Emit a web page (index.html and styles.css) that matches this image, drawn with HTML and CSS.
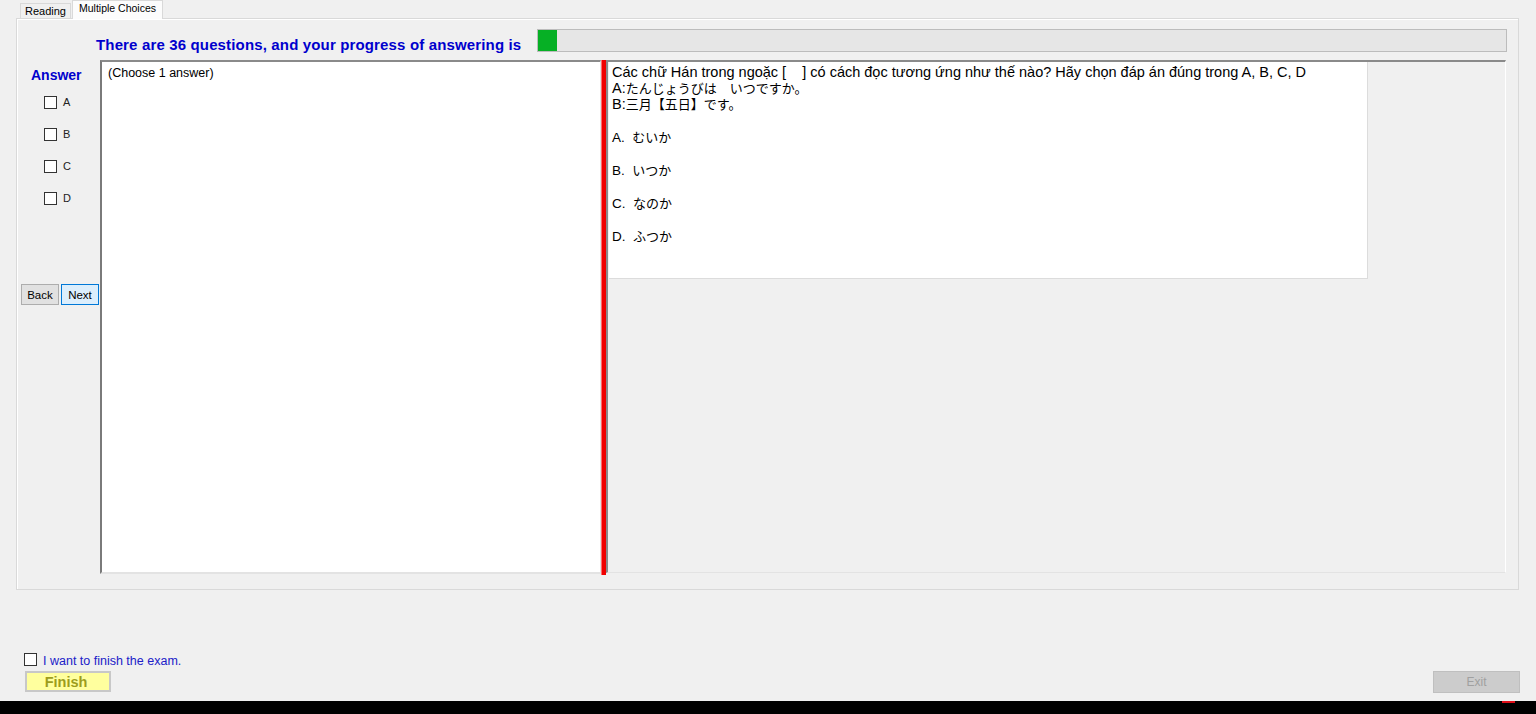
FILE: index.html
```html
<!DOCTYPE html>
<html>
<head>
<meta charset="utf-8">
<link rel="stylesheet" href="styles.css">
</head>
<body>
<div class="window">
  <div class="tabs">
    <div class="tab">Reading</div>
    <div class="tab active">Multiple Choices</div>
  </div>
  <div class="tabpage">
    <div class="header">
      <div class="progress-label">There are 36 questions, and your progress of answering is</div>
      <div class="progress"><div class="progress-fill" style="width:19px"></div></div>
    </div>
    <div class="main">
      <div class="answer-col">
        <div class="answer-title">Answer</div>
        <div class="choices">
          <label class="choice"><span class="box"></span><span class="choice-text">A</span></label>
          <label class="choice"><span class="box"></span><span class="choice-text">B</span></label>
          <label class="choice"><span class="box"></span><span class="choice-text">C</span></label>
          <label class="choice"><span class="box"></span><span class="choice-text">D</span></label>
        </div>
        <div class="nav">
          <button class="btn">Back</button>
          <button class="btn btn-focus">Next</button>
        </div>
      </div>
      <div class="text-panel">(Choose 1 answer)</div>
      <div class="splitter"></div>
      <div class="right-panel">
        <div class="question">
          <div class="q-line">Các chữ Hán trong ngoặc [&nbsp;&nbsp;&nbsp;&nbsp;] có cách đọc tương ứng như thế nào? Hãy chọn đáp án đúng trong A, B, C, D</div>
          <div class="q-line">A:<span class="jp">たんじょうびは　いつですか。</span></div>
          <div class="q-line">B:<span class="jp">三月【五日】です。</span></div>
          <div class="options">
            <div class="opt">A.&nbsp;&nbsp;<span class="jp">むいか</span></div>
            <div class="opt">B.&nbsp;&nbsp;<span class="jp">いつか</span></div>
            <div class="opt">C.&nbsp;&nbsp;<span class="jp">なのか</span></div>
            <div class="opt">D.&nbsp;&nbsp;<span class="jp">ふつか</span></div>
          </div>
        </div>
      </div>
    </div>
  </div>
  <div class="bottom">
    <label class="finish-check"><span class="box"></span><span class="finish-text">I want to finish the exam.</span></label>
    <div class="bottom-row">
      <button class="finish-btn">Finish</button>
      <button class="exit-btn" disabled>Exit</button>
    </div>
  </div>
</div>
<div class="taskbar"><span class="tray-mark"></span></div>
</body>
</html>
```
FILE: styles.css
```css
html, body {
  margin: 0;
  padding: 0;
}
body {
  width: 1536px;
  height: 714px;
  overflow: hidden;
  background: #f0f0f0;
  font-family: "Liberation Sans", Arial, "Noto Sans CJK JP", sans-serif;
  color: #000;
}
.window {
  height: 701px;
  display: flex;
  flex-direction: column;
}
.tabs {
  display: flex;
  align-items: flex-end;
  height: 18px;
  padding-left: 20px;
  position: relative;
  z-index: 2;
}
.tab {
  height: 15px;
  line-height: 15px;
  padding: 0 4px 0 4px;
  font-size: 11px;
  border: 1px solid #d9d9d9;
  border-bottom: none;
  background: #f0f0f0;
  box-sizing: border-box;
  color: #000;
}
.tab.active {
  height: 19px;
  line-height: 15px;
  background: #fcfcfc;
  padding: 0 6px 0 6px;
  font-size: 10.5px;
  margin-bottom: -1px;
  margin-left: 1px;
  border-left: 1px solid #d9d9d9;
}
.tabpage {
  margin-left: 16px;
  width: 1503px;
  height: 572px;
  box-sizing: border-box;
  border: 1px solid #d9d9d9;
  box-shadow: inset 1px 1px 0 #ffffff;
  display: flex;
  flex-direction: column;
}
.header {
  height: 41px;
  display: flex;
  align-items: flex-start;
  padding-left: 79px;
  padding-top: 10px;
  box-sizing: border-box;
}
.progress-label {
  margin-top: 7px;
  font-size: 15px;
  line-height: 17px;
  letter-spacing: 0.15px;
  font-weight: bold;
  color: #0000cd;
  white-space: nowrap;
}
.progress {
  margin-left: auto;
  margin-right: 11px;
  width: 970px;
  height: 23px;
  box-sizing: border-box;
  border: 1px solid #bcbcbc;
  background: #e6e6e6;
}
.progress-fill {
  height: 100%;
  background: #06b025;
}
.main {
  display: flex;
  height: 514px;
}
.answer-col {
  width: 83px;
  flex: none;
  display: flex;
  flex-direction: column;
}
.answer-title {
  margin-top: 7px;
  padding-left: 14px;
  font-size: 14px;
  line-height: 16px;
  font-weight: bold;
  color: #0000cd;
}
.choices {
  margin-top: 13px;
  display: flex;
  flex-direction: column;
}
.choice {
  height: 32px;
  display: flex;
  align-items: flex-start;
  padding-left: 27px;
}
.box {
  width: 13px;
  height: 13px;
  box-sizing: border-box;
  border: 1px solid #333333;
  background: #ffffff;
  flex: none;
}
.choice-text {
  margin-left: 6px;
  font-size: 11px;
  line-height: 13px;
  color: #222;
}
.nav {
  margin-top: 60px;
  padding-left: 4px;
  display: flex;
  gap: 2px;
}
.btn {
  width: 38px;
  height: 21px;
  padding: 0;
  font-family: "Liberation Sans", Arial, sans-serif;
  font-size: 11.5px;
  color: #000;
  background: #e1e1e1;
  border: 1px solid #adadad;
  box-sizing: border-box;
}
.btn-focus {
  background: #dceefc;
  border-color: #0078d7;
}
.text-panel {
  width: 501px;
  flex: none;
  box-sizing: border-box;
  background: #ffffff;
  border-top: 2px solid #8a8a8a;
  border-left: 2px solid #7a7a7a;
  border-right: 1px solid #e3e3e3;
  border-bottom: 2px solid #e3e3e3;
  padding: 4px 0 0 6px;
  font-size: 12.5px;
  line-height: 15px;
}
.splitter {
  width: 5px;
  flex: none;
  height: 515px;
  background: #f00000;
  border-left: 1px solid #ff6a6a;
  box-sizing: border-box;
}
.right-panel {
  width: 900px;
  flex: none;
  box-sizing: border-box;
  border-top: 2px solid #8a8a8a;
  border-left: 2px solid #8a8a8a;
  border-right: 1px solid #ffffff;
  border-bottom: 1px solid #e3e3e3;
  height: 513px;
}
.question {
  margin-left: 1px;
  width: 759px;
  height: 217px;
  box-sizing: border-box;
  background: #ffffff;
  border-right: 1px solid #dcdcdc;
  border-bottom: 1px solid #dcdcdc;
  padding: 2px 0 0 3px;
  font-size: 14.5px;
}
.q-line {
  line-height: 16px;
  white-space: nowrap;
}
.jp {
  font-family: "Noto Sans CJK JP", sans-serif;
  font-size: 13px;
}
.options {
  margin-top: 17px;
}
.opt {
  height: 33px;
  line-height: 16px;
  font-size: 13.5px;
}
.bottom {
  flex: 1;
  padding-top: 62px;
  padding-left: 24px;
  display: flex;
  flex-direction: column;
}
.finish-check {
  display: flex;
  align-items: center;
  height: 15px;
}
.finish-text {
  margin-left: 6px;
  font-size: 12.5px;
  color: #2020c8;
  margin-top: 2px;
}
.bottom-row {
  margin-top: 4px;
  display: flex;
  align-items: flex-start;
  padding-left: 1px;
}
.finish-btn {
  width: 86px;
  height: 21px;
  padding: 0 4px 0 0;
  background: #ffff9e;
  border: 2px solid #c8c8c8;
  box-sizing: border-box;
  font-family: "Liberation Sans", Arial, sans-serif;
  font-weight: bold;
  font-size: 14.5px;
  color: #9d9d1c;
}
.exit-btn {
  margin-left: auto;
  margin-right: 16px;
  width: 87px;
  height: 22px;
  padding: 0;
  background: #cccccc;
  border: 1px solid #bfbfbf;
  box-sizing: border-box;
  font-family: "Liberation Sans", Arial, sans-serif;
  font-size: 12px;
  color: #a0a0a0;
}
.taskbar {
  height: 13px;
  background: #000000;
  position: relative;
}
.tray-mark {
  position: absolute;
  left: 1502px;
  top: 0;
  width: 13px;
  height: 2px;
  background: #e0101a;
}
```
